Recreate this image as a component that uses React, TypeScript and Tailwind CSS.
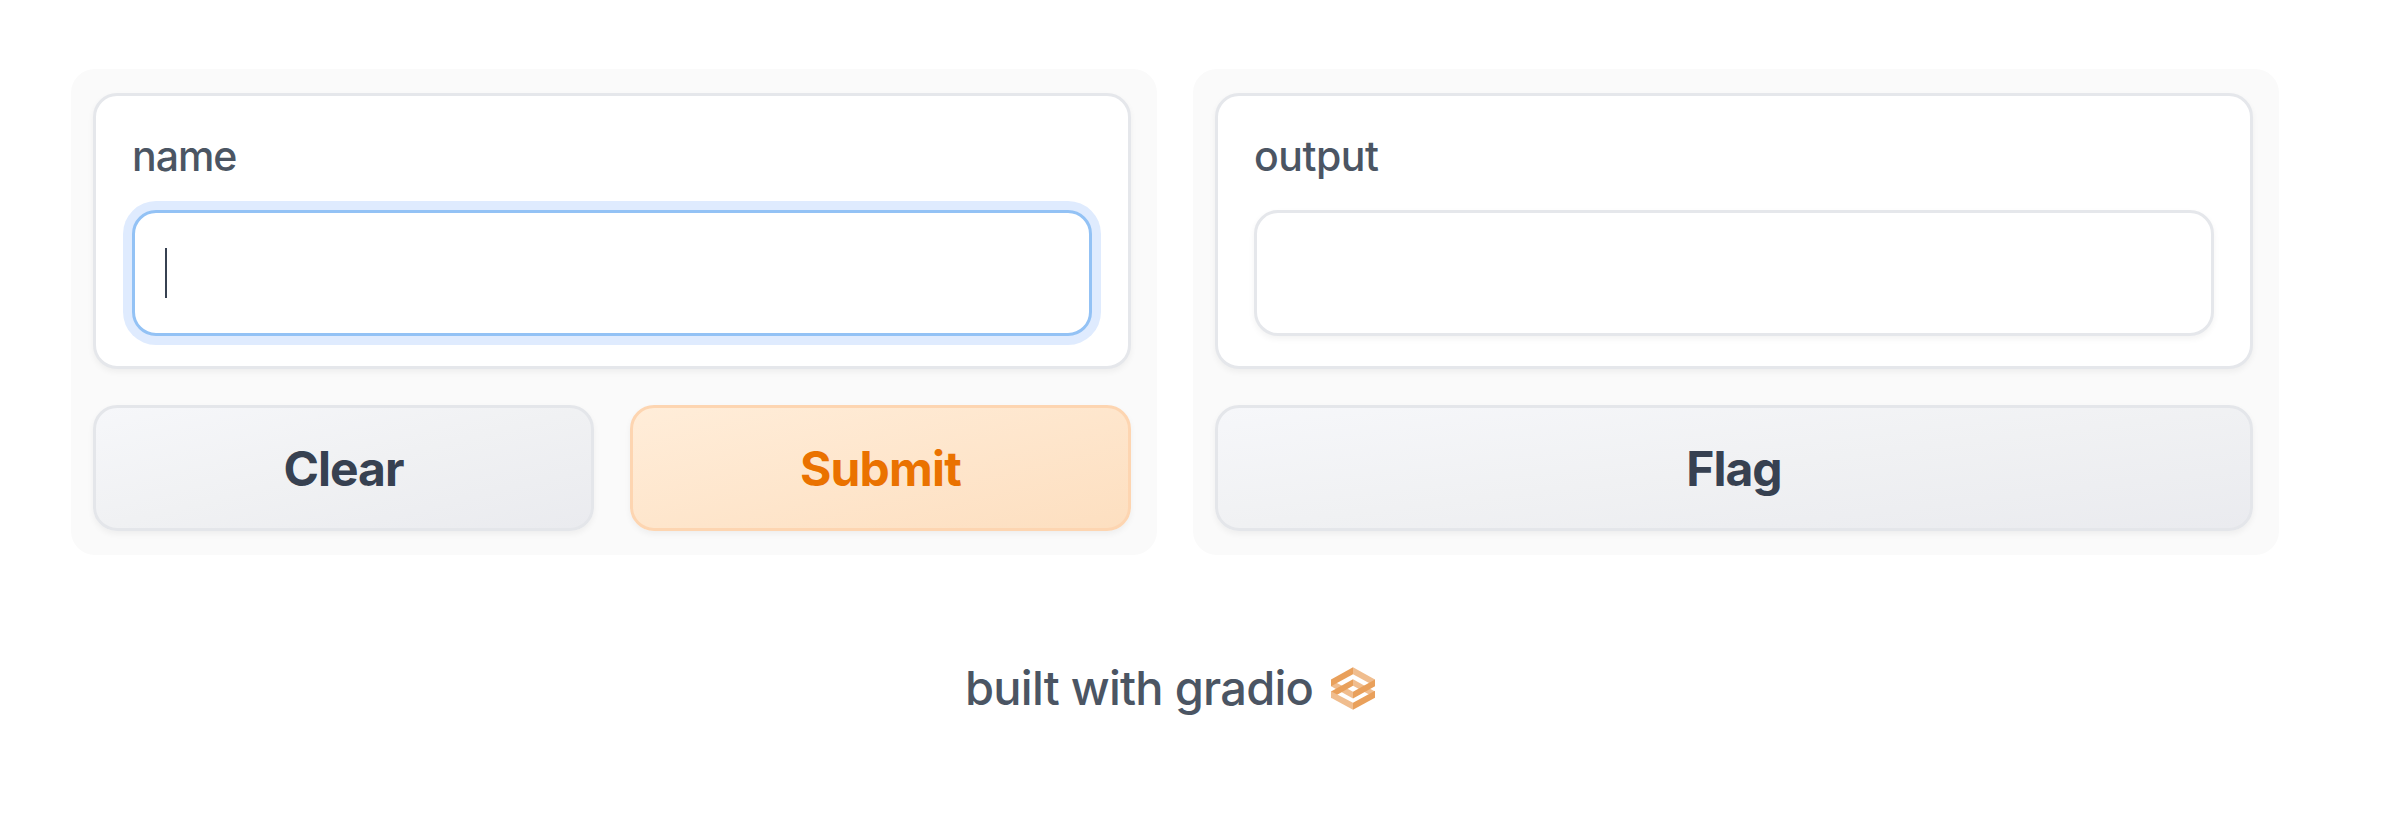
import type { ReactNode } from "react";

function Panel({ children }: { children: ReactNode }) {
  return (
    <section className="flex h-[486px] w-[1086px] flex-col gap-9 rounded-3xl bg-[#fafafa] pt-6 pr-[26px] pb-6 pl-[22px]">
      {children}
    </section>
  );
}

function Field({ label, focused = false }: { label: string; focused?: boolean }) {
  return (
    <div className="flex h-[276px] flex-col rounded-3xl border-3 border-[#e5e7eb] bg-white px-9 pt-[30px] shadow-[0_3px_6px_rgba(0,0,0,0.05)]">
      <span
        className={
          focused
            ? "mb-6 h-[60px] text-[41px] leading-[60px] font-[450] tracking-[-1px] text-[#4b5563]"
            : "mb-6 h-[60px] text-[41px] leading-[60px] font-[450] tracking-[-0.5px] text-[#4b5563]"
        }
      >
        {label}
      </span>
      <div
        className={
          focused
            ? "flex h-[126px] items-center rounded-3xl border-3 border-[#93c2f5] bg-white pl-[30px] shadow-[0_0_0_9px_#dfebfe,0_3px_6px_rgba(0,0,0,0.05)]"
            : "flex h-[126px] items-center rounded-3xl border-3 border-[#e5e7eb] bg-white pl-[30px] shadow-[0_3px_6px_rgba(0,0,0,0.05)]"
        }
      >
        {focused && <span className="h-[50px] w-[2px] bg-[#374151]" />}
      </div>
    </div>
  );
}

function Button({ label, primary = false }: { label: string; primary?: boolean }) {
  return (
    <button
      className={
        primary
          ? "h-[126px] flex-1 rounded-3xl border-3 border-[#fdd5b1] bg-linear-to-br from-[#ffedd9] to-[#fddfc0] pt-[2px] text-[48px] font-[650] tracking-[-0.8px] text-[#ea7200] shadow-[0_3px_6px_rgba(0,0,0,0.05)]"
          : "h-[126px] flex-1 rounded-3xl border-3 border-[#e4e6ea] bg-linear-to-br from-[#f6f7fa] via-[#f0f1f3] to-[#eaebef] pt-[2px] text-[48px] font-[650] tracking-[-1px] text-[#374151] shadow-[0_3px_6px_rgba(0,0,0,0.05)]"
      }
    >
      {label}
    </button>
  );
}

function Logo() {
  return (
    <svg viewBox="0 0 132 128" className="h-[43px] w-[44px]">
      <path d="M0 38L66 74V94L0 57Z" fill="#f0bd8e" />
      <path d="M66 36L132 73V92L66 56Z" fill="#f0bd8e" />
      <path d="M66 0L132 37V57L66 21Z" fill="#f0bd8e" />
      <path d="M0 37L66 0V21L0 57Z" fill="#e9a05b" />
      <path d="M66 74L132 37V57L66 94Z" fill="#e9a05b" />
      <path d="M0 73L66 36V56L0 93Z" fill="#e9a05b" />
      <path d="M0 72L66 107V128L0 92Z" fill="#f0bd8e" />
      <path d="M66 107L132 71V92L66 128Z" fill="#e9a05b" />
    </svg>
  );
}

export default function App() {
  return (
    <main className="h-[813px] w-[2404px] overflow-hidden bg-white pt-[69px] font-['Inter','Liberation_Sans',sans-serif]">
      <div className="ml-[71px] flex gap-9">
        <Panel>
          <Field label="name" focused />
          <div className="flex gap-9">
            <Button label="Clear" />
            <Button label="Submit" primary />
          </div>
        </Panel>
        <Panel>
          <Field label="output" />
          <div className="flex">
            <Button label="Flag" />
          </div>
        </Panel>
      </div>
      <footer className="mt-[97px] ml-[965px] flex h-[72px] items-center text-[#4b5563]">
        <span className="w-[366px] text-[47px] leading-[72px] font-[450] tracking-[-0.75px]">built with gradio</span>
        <Logo />
      </footer>
    </main>
  );
}
